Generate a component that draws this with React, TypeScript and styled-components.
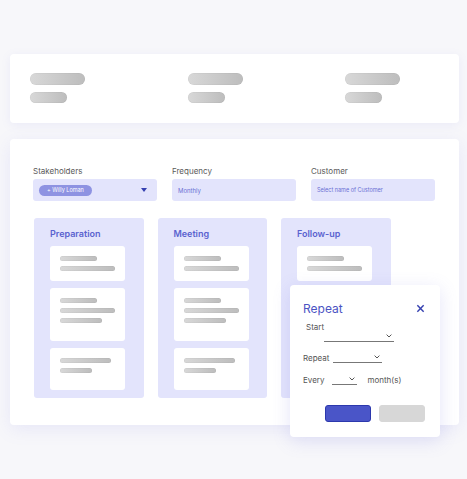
import React from 'react';
import styled, { createGlobalStyle } from 'styled-components';

const GlobalStyle = createGlobalStyle`
  html, body {
    margin: 0;
    padding: 0;
    background: #f7f7fa;
    font-family: Inter, "Noto Sans", sans-serif;
  }
`;

const Page = styled.div`
  width: 467px;
  height: 479px;
  padding: 54px 8px 0 10px;
  box-sizing: border-box;
  display: flex;
  flex-direction: column;
  gap: 16px;
  overflow: hidden;
`;

const StatCard = styled.div`
  height: 69px;
  box-sizing: border-box;
  background: #fff;
  border-radius: 4px;
  box-shadow: 0 2px 10px rgba(130, 130, 230, 0.1);
  padding: 19px 0 0 20px;
  display: grid;
  grid-template-columns: repeat(3, 157.5px);
`;

const Stat = styled.div`
  display: flex;
  flex-direction: column;
  gap: 7px;
`;

const Bar = styled.div<{ $w: number; $h: number }>`
  width: ${({ $w }) => $w}px;
  height: ${({ $h }) => $h}px;
  border-radius: ${({ $h }) => $h / 2}px;
  background: linear-gradient(90deg, #d8d8d8, #bdbdbd);
  box-shadow: inset 0 0 0 0.5px rgba(0, 0, 0, 0.06);
`;

const MainCard = styled.div`
  position: relative;
  height: 286px;
  box-sizing: border-box;
  background: #fff;
  border-radius: 4px;
  box-shadow: 0 4px 18px rgba(120, 120, 230, 0.13);
  padding: 27px 0 0 23px;
`;

const Fields = styled.div`
  display: grid;
  grid-template-columns: repeat(3, 124px);
  column-gap: 15px;
`;

const Field = styled.div`
  display: flex;
  flex-direction: column;
  gap: 3px;
`;

const Label = styled.div`
  font-size: 8px;
  line-height: 10px;
  color: #5a5a5a;
`;

const InputBox = styled.div<{ $small?: boolean }>`
  height: 22px;
  border-radius: 3px;
  background: #e3e4fc;
  display: flex;
  align-items: center;
  padding: 0 10px 0 6px;
  box-sizing: border-box;
  font-size: ${({ $small }) => ($small ? '5.5px' : '6px')};
  color: #6a70d4;
`;

const Chip = styled.span`
  height: 11px;
  padding: 0 8px;
  border-radius: 6px;
  background: #8e93e2;
  color: #fff;
  font-size: 5.5px;
  display: inline-flex;
  align-items: center;
`;

const Caret = styled.span`
  margin-left: auto;
  width: 0;
  height: 0;
  border-left: 3px solid transparent;
  border-right: 3px solid transparent;
  border-top: 4px solid #3540b0;
`;

const Board = styled.div`
  margin-top: 17px;
  margin-left: 1px;
  display: flex;
  gap: 14px;
`;

const Column = styled.div`
  width: 109.5px;
  height: 180px;
  box-sizing: border-box;
  background: #e3e4fc;
  border-radius: 3px;
  padding: 10px 0 0 16px;
  display: flex;
  flex-direction: column;
  gap: 7px;
`;

const ColumnTitle = styled.div`
  font-size: 9px;
  line-height: 12px;
  font-weight: 600;
  color: #5a62cf;
  margin-bottom: -1px;
`;

const Task = styled.div<{ $h: number }>`
  width: 75px;
  height: ${({ $h }) => $h}px;
  box-sizing: border-box;
  background: #fff;
  border-radius: 3px;
  padding: 10px 0 0 10px;
  display: flex;
  flex-direction: column;
  gap: 5px;
`;

const Dialog = styled.div`
  position: absolute;
  left: 280px;
  top: 146px;
  width: 150px;
  height: 152px;
  box-sizing: border-box;
  background: #fff;
  border-radius: 4px;
  box-shadow: 0 4px 18px rgba(110, 110, 220, 0.18);
  padding: 16px 15px 15px 13px;
  display: flex;
  flex-direction: column;
`;

const DialogHead = styled.div`
  display: flex;
  align-items: center;
  justify-content: space-between;
  height: 14px;
`;

const DialogTitle = styled.div`
  font-size: 12px;
  color: #4b53c3;
`;

const Close = styled.svg`
  width: 9px;
  height: 9px;
`;

const DialogLabel = styled.span<{ $indent?: number }>`
  font-size: 8px;
  line-height: 10px;
  color: #555;
  padding-left: ${({ $indent }) => $indent ?? 0}px;
`;

const StartLabel = styled(DialogLabel)`
  display: block;
  margin-top: 7px;
`;

const Select = styled.div<{ $w: number; $ml?: number; $h?: number }>`
  position: relative;
  width: ${({ $w }) => $w}px;
  height: ${({ $h }) => $h ?? 7}px;
  margin-left: ${({ $ml }) => $ml ?? 0}px;
  border-bottom: 1px solid #777;
  svg {
    position: absolute;
    right: 2px;
    bottom: 3px;
  }
`;

const Row = styled.div<{ $mt: number }>`
  display: flex;
  align-items: flex-end;
  margin-top: ${({ $mt }) => $mt}px;
  gap: 4px;
`;

const Buttons = styled.div`
  margin-top: auto;
  display: flex;
  justify-content: flex-end;
  gap: 8px;
`;

const Button = styled.div<{ $primary?: boolean }>`
  width: 46px;
  height: 17px;
  box-sizing: border-box;
  border-radius: 3px;
  background: ${({ $primary }) => ($primary ? '#4a55c8' : '#d7d7d7')};
  border: 1px solid ${({ $primary }) => ($primary ? '#2c38ad' : '#d7d7d7')};
`;

const Chevron = () => (
  <svg width="6" height="4" viewBox="0 0 6 4">
    <path d="M0.6 0.6 L3 3 L5.4 0.6" fill="none" stroke="#555" strokeWidth="1" />
  </svg>
);

const columns = [
  { title: 'Preparation', tasks: [[37, 55], [37, 55, 42], [51, 32]] },
  { title: 'Meeting', tasks: [[37, 55], [37, 55, 42], [51, 32]] },
  { title: 'Follow-up', tasks: [[37, 55]] },
];

const taskHeights = [35, 53, 42];

const App: React.FC = () => (
  <>
    <GlobalStyle />
    <Page>
      <StatCard>
        {[0, 1, 2].map((i) => (
          <Stat key={i}>
            <Bar $w={55} $h={12} />
            <Bar $w={37} $h={11} />
          </Stat>
        ))}
      </StatCard>

      <MainCard>
        <Fields>
          <Field>
            <Label>Stakeholders</Label>
            <InputBox>
              <Chip>+ Willy Loman</Chip>
              <Caret />
            </InputBox>
          </Field>
          <Field>
            <Label>Frequency</Label>
            <InputBox>Monthly</InputBox>
          </Field>
          <Field>
            <Label>Customer</Label>
            <InputBox $small>Select name of Customer</InputBox>
          </Field>
        </Fields>

        <Board>
          {columns.map((col) => (
            <Column key={col.title}>
              <ColumnTitle>{col.title}</ColumnTitle>
              {col.tasks.map((bars, i) => (
                <Task key={i} $h={taskHeights[i]}>
                  {bars.map((w, j) => (
                    <Bar key={j} $w={w} $h={5} />
                  ))}
                </Task>
              ))}
            </Column>
          ))}
        </Board>

        <Dialog>
          <DialogHead>
            <DialogTitle>Repeat</DialogTitle>
            <Close viewBox="0 0 10 10">
              <path d="M1.5 1.5 L8.5 8.5 M8.5 1.5 L1.5 8.5" stroke="#3540b0" strokeWidth="1.6" />
            </Close>
          </DialogHead>
          <StartLabel $indent={3}>Start</StartLabel>
          <Select $w={70} $ml={21} $h={9}>
            <Chevron />
          </Select>
          <Row $mt={11}>
            <DialogLabel>Repeat</DialogLabel>
            <Select $w={49}>
              <Chevron />
            </Select>
          </Row>
          <Row $mt={12}>
            <DialogLabel>Every</DialogLabel>
            <Select $w={25} $ml={4}>
              <Chevron />
            </Select>
            <DialogLabel $indent={6}>month(s)</DialogLabel>
          </Row>
          <Buttons>
            <Button $primary />
            <Button />
          </Buttons>
        </Dialog>
      </MainCard>
    </Page>
  </>
);

export default App;
